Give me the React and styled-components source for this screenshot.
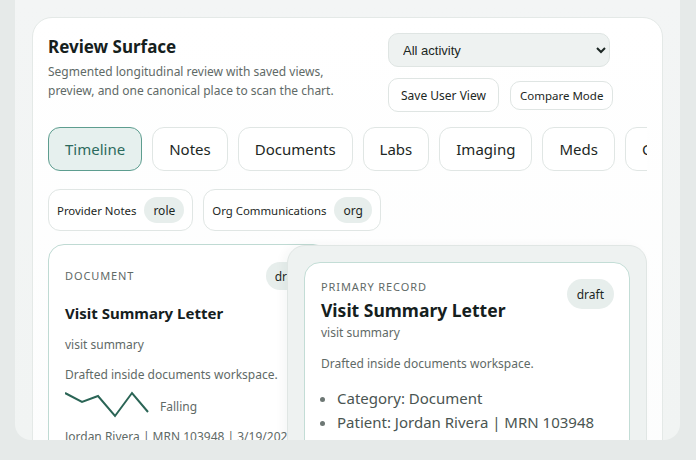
import React from "react";
import styled, { createGlobalStyle } from "styled-components";

const GlobalStyle = createGlobalStyle`
  html, body {
    margin: 0;
    background: #e6eae9;
    font-family: "Noto Sans", "Open Sans", sans-serif;
    color: #1c2724;
  }
`;

const Shell = styled.div`
  margin: 0 16px 0 15px;
  height: 440px;
  box-sizing: border-box;
  padding: 17px 17px 0 17px;
  background: linear-gradient(180deg, #f3f5f5 0%, #f1f4f3 100%);
  border-radius: 0 0 16px 16px;
  overflow: hidden;
`;

const Surface = styled.section`
  background: linear-gradient(180deg, #ffffff 0%, #fbfcfc 100%);
  border: 1px solid #e4e9e7;
  border-radius: 20px;
  padding: 15px 15px 24px;
  min-height: 600px;
`;

const Header = styled.div`
  display: flex;
  justify-content: space-between;
  align-items: flex-start;
  padding-right: 37px;
`;

const TitleBlock = styled.div`
  padding-top: 2px;
`;

const Title = styled.h1`
  margin: 0;
  font-size: 17px;
  line-height: 24px;
  font-weight: 700;
  color: #15201d;
`;

const Subtitle = styled.p`
  margin: 3px 0 0;
  font-size: 12px;
  line-height: 19px;
  color: #5f6a67;
  width: 300px;
`;

const Controls = styled.div`
  display: flex;
  flex-direction: column;
  gap: 11px;
  width: 222px;
`;

const Select = styled.select`
  height: 34px;
  width: 222px;
  padding: 0 10px;
  border: 1px solid #dfe5e3;
  border-radius: 10px;
  background: #eef2f1;
  font-family: "Liberation Sans", Arial, sans-serif;
  font-size: 13px;
  color: #1c2724;
`;

const ButtonRow = styled.div`
  display: flex;
  align-items: center;
  gap: 11px;
`;

const GhostButton = styled.button`
  flex: none;
  white-space: nowrap;
  height: ${(p) => (p.$compact ? "29px" : "34px")};
  padding: 0 ${(p) => (p.$compact ? "9px" : "12px")};
  border: 1px solid #dfe5e3;
  border-radius: 10px;
  background: #ffffff;
  font-family: "Noto Sans", sans-serif;
  font-size: ${(p) => (p.$compact ? "11.5px" : "12px")};
  color: #1c2724;
`;

const Tabs = styled.div`
  display: flex;
  gap: 10px;
  margin-top: 15px;
  overflow: hidden;
`;

const Tab = styled.button`
  flex: none;
  height: 44px;
  padding: 0 16px;
  border-radius: 12px;
  border: 1px solid ${(p) => (p.$active ? "#5d9d8f" : "#e0e6e4")};
  background: ${(p) => (p.$active ? "#e6f0ee" : "#ffffff")};
  color: ${(p) => (p.$active ? "#2c6a5d" : "#1c2724")};
  font-family: "Noto Sans", sans-serif;
  font-size: 15px;
`;

const Chips = styled.div`
  display: flex;
  gap: 10px;
  margin-top: 18px;
`;

const Chip = styled.div`
  display: flex;
  align-items: center;
  gap: 8px;
  height: 42px;
  box-sizing: border-box;
  padding: 0 8px;
  border: 1px solid #e0e6e4;
  border-radius: 12px;
  background: #ffffff;
  font-size: 11.4px;
  color: #1c2724;
`;

const Pill = styled.span`
  display: inline-flex;
  align-items: center;
  flex: none;
  height: ${(p) => p.$h || 26}px;
  padding: 0 ${(p) => (p.$h > 28 ? "10px" : "9px")};
  border-radius: 15px;
  background: #e7eeec;
  font-size: 12px;
  color: #1c2724;
`;

const Board = styled.div`
  position: relative;
  display: grid;
  grid-template-columns: 281px 1fr;
  gap: 36px;
  margin-top: 13px;
`;

const RecordCard = styled.article`
  border: 1px solid #bfdad3;
  border-radius: 16px;
  padding: 17px 17px 17px 16px;
  background: #ffffff;
`;

const CardTop = styled.div`
  display: flex;
  justify-content: space-between;
  align-items: flex-start;
`;

const Eyebrow = styled.div`
  font-size: 11px;
  letter-spacing: 0.9px;
  text-transform: uppercase;
  color: #5f6a67;
  line-height: 16px;
  padding-top: ${(p) => p.$pad || 0}px;
`;

const CardTitle = styled.h3`
  margin: ${(p) => (p.$big ? "3px 0 0" : "12px 0 0")};
  font-size: ${(p) => (p.$big ? "17.5px" : "15px")};
  line-height: ${(p) => (p.$big ? "24px" : "22px")};
  font-weight: 700;
  color: #15201d;
`;

const Meta = styled.div`
  margin-top: ${(p) => p.$gap}px;
  font-size: 12px;
  line-height: 18px;
  color: #5f6a67;
`;

const TrendRow = styled.div`
  display: flex;
  align-items: center;
  gap: 9px;
  margin-top: 7px;
  font-size: 12px;
  color: #5f6a67;

  span {
    padding-top: 3px;
  }
`;

const Footer = styled.div`
  margin-top: 9px;
  font-size: 12px;
  line-height: 18px;
  color: #5f6a67;
  white-space: nowrap;
`;

const PreviewShell = styled.aside`
  position: absolute;
  top: 1px;
  right: 0;
  width: 360px;
  box-sizing: border-box;
  padding: 16px 16px 0;
  background: #eef2f1;
  border: 1px solid #e0e6e4;
  border-radius: 18px;
  height: 300px;
  box-shadow: -4px 0 10px rgba(30, 50, 45, 0.04);
`;

const PreviewCard = styled.div`
  background: #ffffff;
  border: 1px solid #c3ddd6;
  border-radius: 16px;
  padding: 16px 15px 20px 16px;
  height: 260px;
`;

const PreviewHead = styled.div`
  display: flex;
  justify-content: space-between;
  align-items: flex-start;
`;

const Facts = styled.ul`
  margin: 13px 0 0;
  padding-left: 16px;
  font-size: 15px;
  line-height: 24px;
  color: #4a5552;

  li::marker {
    color: #6d7774;
  }
`;

const Sparkline = () => (
  <svg width="86" height="28" viewBox="0 0 86 28" fill="none">
    <polyline
      points="0,2 17,11 33,5 50,25 67,2 83,21"
      stroke="#2b6556"
      strokeWidth="2"
      strokeLinejoin="miter"
    />
  </svg>
);

const tabs = ["Timeline", "Notes", "Documents", "Labs", "Imaging", "Meds", "Orders"];

export default function App() {
  return (
    <>
      <GlobalStyle />
      <Shell>
        <Surface>
          <Header>
            <TitleBlock>
              <Title>Review Surface</Title>
              <Subtitle>
                Segmented longitudinal review with saved views, preview, and one
                canonical place to scan the chart.
              </Subtitle>
            </TitleBlock>
            <Controls>
              <Select defaultValue="all">
                <option value="all">All activity</option>
                <option value="mine">My activity</option>
              </Select>
              <ButtonRow>
                <GhostButton>Save User View</GhostButton>
                <GhostButton $compact>Compare Mode</GhostButton>
              </ButtonRow>
            </Controls>
          </Header>

          <Tabs>
            {tabs.map((t, i) => (
              <Tab key={t} $active={i === 0}>
                {t}
              </Tab>
            ))}
          </Tabs>

          <Chips>
            <Chip>
              Provider Notes <Pill>role</Pill>
            </Chip>
            <Chip>
              Org Communications <Pill>org</Pill>
            </Chip>
          </Chips>

          <Board>
            <RecordCard>
              <CardTop>
                <Eyebrow $pad={6}>Document</Eyebrow>
                <Pill $h={28}>draft</Pill>
              </CardTop>
              <CardTitle>Visit Summary Letter</CardTitle>
              <Meta $gap={12}>visit summary</Meta>
              <Meta $gap={12}>Drafted inside documents workspace.</Meta>
              <TrendRow>
                <Sparkline />
                <span>Falling</span>
              </TrendRow>
              <Footer>Jordan Rivera | MRN 103948 | 3/19/2026</Footer>
            </RecordCard>
            <div />

            <PreviewShell>
              <PreviewCard>
                <PreviewHead>
                  <div>
                    <Eyebrow>Primary Record</Eyebrow>
                    <CardTitle $big>Visit Summary Letter</CardTitle>
                    <Meta $gap={2}>visit summary</Meta>
                  </div>
                  <Pill $h={30}>draft</Pill>
                </PreviewHead>
                <Meta $gap={13}>Drafted inside documents workspace.</Meta>
                <Facts>
                  <li>Category: Document</li>
                  <li>Patient: Jordan Rivera | MRN 103948</li>
                  <li>Updated: 3/19/2026</li>
                </Facts>
              </PreviewCard>
            </PreviewShell>
          </Board>
        </Surface>
      </Shell>
    </>
  );
}
